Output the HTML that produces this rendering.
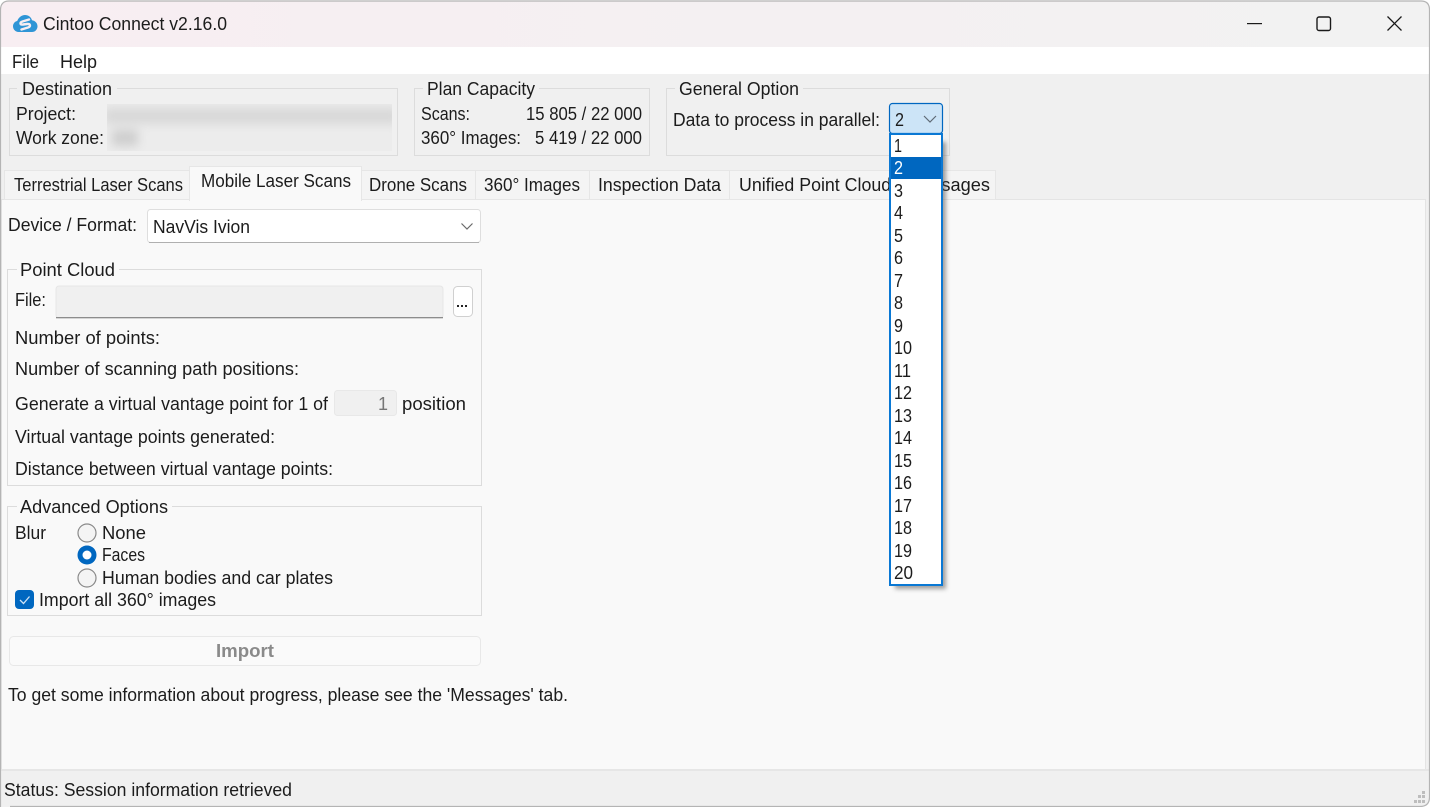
<!DOCTYPE html>
<html><head><meta charset="utf-8"><title>Cintoo Connect v2.16.0</title>
<style>
html,body{margin:0;padding:0;background:#fff;width:1430px;height:807px;overflow:hidden}
svg{display:block}
text{font-family:"Liberation Sans",sans-serif;font-size:18px;fill:#1c1c1c}
</style></head><body>
<svg xmlns="http://www.w3.org/2000/svg" width="1430" height="807" viewBox="0 0 1430 807">
<defs>
<linearGradient id="tb" x1="0" x2="1" y1="0" y2="0"><stop offset="0" stop-color="#f8eef2"/><stop offset=".55" stop-color="#f4f0f2"/><stop offset="1" stop-color="#f2f2f2"/></linearGradient>
<filter id="bl" x="-10%" y="-50%" width="120%" height="200%"><feGaussianBlur stdDeviation="5"/></filter>
<filter id="sh" x="-30%" y="-5%" width="160%" height="110%"><feGaussianBlur stdDeviation="2"/></filter>
<clipPath id="win"><path d="M0 807V10Q0 1 9 1H1421Q1430 1 1430 10V797Q1430 807 1420 807Z"/></clipPath>
<clipPath id="blr"><rect x="107" y="104" width="285" height="47"/></clipPath>
</defs>
<rect width="1430" height="807" fill="#fff"/>
<g clip-path="url(#win)">
<rect width="1430" height="807" fill="#f0f0f0"/>
<rect y="0" width="1430" height="47" fill="url(#tb)"/>
<rect y="47" width="1430" height="27" fill="#fff"/>
<!-- tab pane -->
<rect x="1.5" y="199.5" width="1424" height="570" fill="#f9f9f9" stroke="#e4e4e4"/>
<rect x="0" y="769" width="1430" height="2" fill="#e6e6e6"/>
<!-- inactive tabs -->
<g fill="#f4f4f4" stroke="#e6e6e6">
<rect x="4.5" y="170.5" width="185" height="29"/>
<rect x="361.5" y="170.5" width="114" height="29"/>
<rect x="475.5" y="170.5" width="114" height="29"/>
<rect x="589.5" y="170.5" width="140" height="29"/>
<rect x="729.5" y="170.5" width="171" height="29"/>
<rect x="900.5" y="170.5" width="95" height="29"/>
</g>
<rect x="189.5" y="166.5" width="172" height="34" fill="#f9f9f9" stroke="#e6e6e6"/>
<rect x="190" y="198" width="171" height="4" fill="#f9f9f9"/>
<!-- group boxes -->
<g fill="none" stroke="#dcdcdc">
<rect x="9.5" y="88.5" width="388" height="67"/>
<rect x="414.5" y="88.5" width="235" height="67"/>
<rect x="666.5" y="88.5" width="283" height="67"/>
<rect x="7.5" y="269.5" width="474" height="216"/>
<rect x="7.5" y="506.5" width="474" height="109"/>
</g>
<rect x="17" y="84" width="100" height="8" fill="#f0f0f0"/>
<rect x="423" y="84" width="116" height="8" fill="#f0f0f0"/>
<rect x="675" y="84" width="128" height="8" fill="#f0f0f0"/>
<rect x="17" y="265" width="102" height="8" fill="#f9f9f9"/>
<rect x="17" y="502" width="155" height="8" fill="#f9f9f9"/>
<!-- blurred -->
<rect x="107" y="104" width="285" height="47" fill="#ececec"/>
<g filter="url(#bl)" clip-path="url(#blr)">
<rect x="104" y="108" width="295" height="16" fill="#d8d8d8"/>
<rect x="112" y="130" width="26" height="16" fill="#cecece"/>
</g>
<!-- logo -->
<path d="M18.500 32C15.500 32 13 29.500 13 26.300C13 23.600 14.800 21.500 17.200 21C18.500 17.500 21.500 15 25 15C28.300 15 31 17 32 20.200C35 20.600 37.500 23 37.500 26.200C37.500 29.500 35 32 32 32Z" fill="#2f95d6"/>
<path d="M29 19.500L22.500 21.500C19.500 22.500 20 25 23 24.500L27 24C30.500 23.500 31 26.500 28 27.500L21.500 29.500" fill="none" stroke="#f8eef2" stroke-width="2.400" stroke-linecap="round" stroke-linejoin="round"/>
<!-- window buttons -->
<rect x="1247" y="23" width="15" height="1.200" fill="#1a1a1a"/>
<rect x="1317" y="17" width="13.500" height="13.500" rx="2" fill="none" stroke="#1a1a1a" stroke-width="1.400"/>
<path d="M1387.500 16.500L1401.500 30.500M1401.500 16.500L1387.500 30.500" stroke="#1a1a1a" stroke-width="1.300" fill="none"/>
<!-- main combo -->
<rect x="147.500" y="209.500" width="333" height="33" rx="3" fill="#fff" stroke="#dedede"/>
<path d="M149 242.500H479" stroke="#b0b0b0"/>
<path d="M461.500 223.500L467 229L472.500 223.500" fill="none" stroke="#6a6a6a" stroke-width="1.200"/>
<!-- file -->
<rect x="56" y="286" width="387" height="32" rx="3" fill="#f0f0f0" stroke="#e6e6e6"/>
<rect x="56" y="317" width="387" height="1.300" fill="#8c8c8c"/>
<rect x="453.500" y="286.500" width="19" height="30" rx="4" fill="#fff" stroke="#d0d0d0"/>
<g fill="#222"><rect x="457" y="305" width="2" height="2"/><rect x="461" y="305" width="2" height="2"/><rect x="465" y="305" width="2" height="2"/></g>
<!-- spin -->
<rect x="334.500" y="390.500" width="62" height="25" rx="3" fill="#f0f0f0" stroke="#e8e8e8"/>
<!-- radios -->
<circle cx="87" cy="533" r="9" fill="#f4f4f4" stroke="#8a8a8a" stroke-width="1.200"/>
<circle cx="87" cy="555" r="9.500" fill="#0067c0"/><circle cx="87" cy="555" r="4.500" fill="#fff"/>
<circle cx="87" cy="578" r="9" fill="#f4f4f4" stroke="#8a8a8a" stroke-width="1.200"/>
<rect x="15" y="590" width="19" height="19" rx="4" fill="#0067c0"/>
<path d="M20 600L23.500 603.500L29.500 596.500" fill="none" stroke="#cfe3f6" stroke-width="1.300"/>
<!-- import button -->
<rect x="9.500" y="636.500" width="471" height="29" rx="4" fill="#fafafa" stroke="#e8e8e8"/>
<!-- grip -->
<g fill="#bdbdbd"><rect x="1422" y="791" width="3" height="3"/><rect x="1418" y="795" width="3" height="3"/><rect x="1422" y="795" width="3" height="3"/><rect x="1414" y="800" width="3" height="3"/><rect x="1418" y="800" width="3" height="3"/><rect x="1422" y="800" width="3" height="3"/></g>

<!-- text -->
<text x="43" y="30" textLength="184" lengthAdjust="spacingAndGlyphs">Cintoo Connect v2.16.0</text>
<text x="12" y="68" textLength="27" lengthAdjust="spacingAndGlyphs">File</text>
<text x="60" y="68" textLength="37" lengthAdjust="spacingAndGlyphs">Help</text>
<text x="22" y="95" textLength="90" lengthAdjust="spacingAndGlyphs">Destination</text>
<text x="16" y="120" textLength="60" lengthAdjust="spacingAndGlyphs">Project:</text>
<text x="16" y="144" textLength="88" lengthAdjust="spacingAndGlyphs">Work zone:</text>
<text x="427" y="95" textLength="108" lengthAdjust="spacingAndGlyphs">Plan Capacity</text>
<text x="421" y="120" textLength="49" lengthAdjust="spacingAndGlyphs">Scans:</text>
<text x="526" y="120" textLength="116" lengthAdjust="spacingAndGlyphs">15 805 / 22 000</text>
<text x="421" y="144" textLength="100" lengthAdjust="spacingAndGlyphs">360° Images:</text>
<text x="535" y="144" textLength="107" lengthAdjust="spacingAndGlyphs">5 419 / 22 000</text>
<text x="679" y="95" textLength="120" lengthAdjust="spacingAndGlyphs">General Option</text>
<text x="673" y="126" textLength="207" lengthAdjust="spacingAndGlyphs">Data to process in parallel:</text>
<text x="14" y="191" textLength="169" lengthAdjust="spacingAndGlyphs">Terrestrial Laser Scans</text>
<text x="201" y="187" textLength="150" lengthAdjust="spacingAndGlyphs">Mobile Laser Scans</text>
<text x="369" y="191" textLength="98" lengthAdjust="spacingAndGlyphs">Drone Scans</text>
<text x="484" y="191" textLength="96" lengthAdjust="spacingAndGlyphs">360° Images</text>
<text x="598" y="191" textLength="123" lengthAdjust="spacingAndGlyphs">Inspection Data</text>
<text x="739" y="191" textLength="161" lengthAdjust="spacingAndGlyphs">Unified Point Clouds</text>
<text x="907" y="191" textLength="83" lengthAdjust="spacingAndGlyphs">Messages</text>
<text x="8" y="231" textLength="129" lengthAdjust="spacingAndGlyphs">Device / Format:</text>
<text x="153" y="233" textLength="97" lengthAdjust="spacingAndGlyphs">NavVis Ivion</text>
<text x="20" y="276" textLength="95" lengthAdjust="spacingAndGlyphs">Point Cloud</text>
<text x="15" y="306" textLength="31" lengthAdjust="spacingAndGlyphs">File:</text>
<text x="15" y="344" textLength="145" lengthAdjust="spacingAndGlyphs">Number of points:</text>
<text x="15" y="375" textLength="284" lengthAdjust="spacingAndGlyphs">Number of scanning path positions:</text>
<text x="15" y="410" textLength="313" lengthAdjust="spacingAndGlyphs">Generate a virtual vantage point for 1 of</text>
<text x="378" y="410" style="fill:#777">1</text>
<text x="402" y="410" textLength="64" lengthAdjust="spacingAndGlyphs">position</text>
<text x="15" y="443" textLength="260" lengthAdjust="spacingAndGlyphs">Virtual vantage points generated:</text>
<text x="15" y="475" textLength="318" lengthAdjust="spacingAndGlyphs">Distance between virtual vantage points:</text>
<text x="20" y="513" textLength="148" lengthAdjust="spacingAndGlyphs">Advanced Options</text>
<text x="15" y="539" textLength="31" lengthAdjust="spacingAndGlyphs">Blur</text>
<text x="102" y="539" textLength="44" lengthAdjust="spacingAndGlyphs">None</text>
<text x="102" y="561" textLength="43" lengthAdjust="spacingAndGlyphs">Faces</text>
<text x="102" y="584" textLength="231" lengthAdjust="spacingAndGlyphs">Human bodies and car plates</text>
<text x="39" y="606" textLength="177" lengthAdjust="spacingAndGlyphs">Import all 360° images</text>
<text x="216" y="657" textLength="58" lengthAdjust="spacingAndGlyphs" style="fill:#8a8a8a;font-weight:bold">Import</text>
<text x="8" y="701" textLength="560" lengthAdjust="spacingAndGlyphs">To get some information about progress, please see the 'Messages' tab.</text>
<text x="4" y="796" textLength="288" lengthAdjust="spacingAndGlyphs">Status: Session information retrieved</text>

<!-- parallel combo -->
<rect x="889.500" y="103.500" width="53" height="30" rx="3" fill="#cce4f7" stroke="#0067c0" stroke-width="1.200"/>
<text x="895" y="126" textLength="9" lengthAdjust="spacingAndGlyphs">2</text>
<path d="M924 116L930 122L936 116" fill="none" stroke="#5f6a75" stroke-width="1.200"/>
<!-- dropdown -->
<rect x="895" y="142" width="51" height="447" fill="#555" opacity=".55" filter="url(#sh)"/>
<rect x="890" y="134" width="52" height="451" fill="#fff" stroke="#0a78d4" stroke-width="2"/>
<rect x="891" y="157" width="50" height="22" fill="#0067c0"/>
<g>
<text x="894" y="152" textLength="8" lengthAdjust="spacingAndGlyphs">1</text>
<text x="894" y="174" textLength="9" lengthAdjust="spacingAndGlyphs" style="fill:#fff">2</text>
<text x="894" y="197" textLength="9" lengthAdjust="spacingAndGlyphs">3</text>
<text x="894" y="219" textLength="9" lengthAdjust="spacingAndGlyphs">4</text>
<text x="894" y="242" textLength="9" lengthAdjust="spacingAndGlyphs">5</text>
<text x="894" y="264" textLength="9" lengthAdjust="spacingAndGlyphs">6</text>
<text x="894" y="287" textLength="9" lengthAdjust="spacingAndGlyphs">7</text>
<text x="894" y="309" textLength="9" lengthAdjust="spacingAndGlyphs">8</text>
<text x="894" y="332" textLength="9" lengthAdjust="spacingAndGlyphs">9</text>
<text x="894" y="354" textLength="18" lengthAdjust="spacingAndGlyphs">10</text>
<text x="894" y="377" textLength="17" lengthAdjust="spacingAndGlyphs">11</text>
<text x="894" y="399" textLength="18" lengthAdjust="spacingAndGlyphs">12</text>
<text x="894" y="422" textLength="18" lengthAdjust="spacingAndGlyphs">13</text>
<text x="894" y="444" textLength="18" lengthAdjust="spacingAndGlyphs">14</text>
<text x="894" y="467" textLength="18" lengthAdjust="spacingAndGlyphs">15</text>
<text x="894" y="489" textLength="18" lengthAdjust="spacingAndGlyphs">16</text>
<text x="894" y="512" textLength="18" lengthAdjust="spacingAndGlyphs">17</text>
<text x="894" y="534" textLength="18" lengthAdjust="spacingAndGlyphs">18</text>
<text x="894" y="557" textLength="18" lengthAdjust="spacingAndGlyphs">19</text>
<text x="894" y="579" textLength="19" lengthAdjust="spacingAndGlyphs">20</text>
</g>
</g>
<!-- window border -->
<path d="M.5 807V10Q.5 1 9 1H1421Q1429.500 1 1429.500 10V797Q1429.500 806.500 1420 806.500H10" fill="none" stroke="#b4b4b4" stroke-width="1.200"/>
</svg>
</body></html>
